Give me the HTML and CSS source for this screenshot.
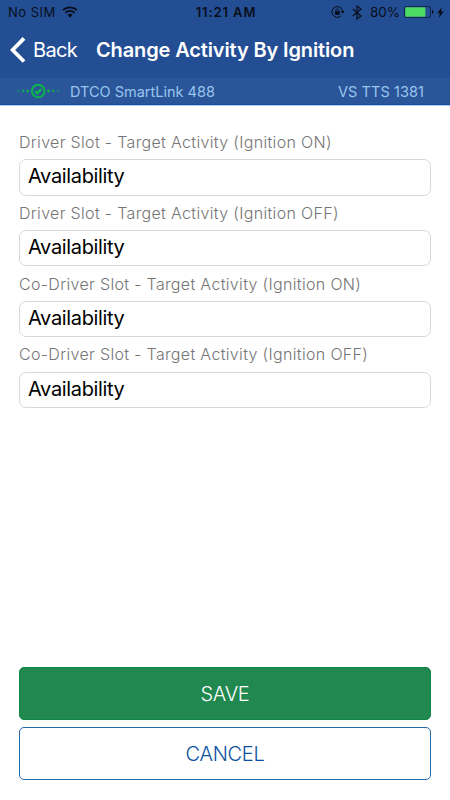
FILE: index.html
```html
<!DOCTYPE html>
<html lang="en">
<head>
<meta charset="utf-8">
<title>Change Activity By Ignition</title>
<link rel="stylesheet" href="styles.css">
</head>
<body>
<div class="screen">
  <header class="header">
    <div class="status">
      <div class="status-side">
        <span class="carrier">No SIM</span>
        <svg class="wifi" width="16" height="12" viewBox="0 0 16 12" fill="none" stroke="#070e1a" stroke-width="1.7"><path d="M1 4.2a10 10 0 0 1 14 0M3.4 6.8a6.5 6.5 0 0 1 9.2 0"/><path d="M8 11.5 5.5 9a3.5 3.5 0 0 1 5 0Z" fill="#070e1a" stroke="none"/></svg>
      </div>
      <span class="time">11:21 AM</span>
      <div class="status-side right">
        <svg class="lock" width="14" height="12" viewBox="0 0 14 12" fill="none" stroke="#070e1a"><path d="M11.7 5.8a5.4 5.4 0 1 0-1.6 4" stroke-width="1"/><path d="M9.7 5h4L11.7 7.8Z" fill="#070e1a" stroke="none"/><path d="M3.9 5.2h4.8v3.6H3.9Z" fill="#070e1a" stroke="none"/><path d="M4.9 5.5V4.3a1.4 1.4 0 0 1 2.8 0v1.2" stroke-width=".9"/></svg>
        <svg class="bluetooth" width="10" height="15" viewBox="0 0 10 15" fill="none" stroke="#070e1a" stroke-width="1.2"><path d="m.8 4 8.2 7-4 3V1l4 3-8.2 7"/></svg>
        <span class="percent">80%</span>
        <svg class="battery" width="30" height="12" viewBox="0 0 30 12"><rect x=".5" y=".5" width="26" height="11" rx="1.7" fill="none" stroke="#10264a"/><rect x="1.2" y="1.2" width="20.2" height="9.6" rx=".8" fill="#4cd964"/><path d="M28 4q1.5.3 1.5 2T28 8Z" fill="#070e1a"/></svg>
        <svg class="bolt" width="7" height="11" viewBox="0 0 7 11"><path d="M4.8 0 .3 6.2h2.5L1.8 11l4.9-6.4H4.1Z" fill="#070e1a"/></svg>
      </div>
    </div>
    <nav class="nav">
      <svg class="chevron" width="16" height="26" viewBox="0 0 16 26" fill="none" stroke="#fff" stroke-width="3.8"><path d="M14 1.3 2.6 13 14 24.5"/></svg>
      <span class="back">Back</span>
      <h1 class="title">Change Activity By Ignition</h1>
    </nav>
    <div class="device">
      <svg class="link" width="44" height="16" viewBox="0 0 44 16" fill="#0bb44e"><circle cx="2.3" cy="8" r="1.4" opacity=".4"/><circle cx="7" cy="8" r="1.4" opacity=".75"/><circle cx="11.7" cy="8" r="1.5"/><circle cx="32.5" cy="8" r="1.5"/><circle cx="37.4" cy="8" r="1.4" opacity=".75"/><circle cx="42.3" cy="8" r="1.4" opacity=".4"/><circle cx="22.2" cy="8" r="6.3" fill="none" stroke="#0bb44e" stroke-width="2"/><path d="m19.2 8.2 2.1 2 4-4" fill="none" stroke="#0bb44e" stroke-width="2.4"/></svg>
      <span class="device-name">DTCO SmartLink 488</span>
      <span class="vehicle">VS TTS 1381</span>
    </div>
  </header>
  <main class="form">
    <div class="field"><label class="label">Driver Slot - Target Activity (Ignition ON)</label><div class="value">Availability</div></div>
    <div class="field"><label class="label">Driver Slot - Target Activity (Ignition OFF)</label><div class="value">Availability</div></div>
    <div class="field"><label class="label">Co-Driver Slot - Target Activity (Ignition ON)</label><div class="value">Availability</div></div>
    <div class="field"><label class="label">Co-Driver Slot - Target Activity (Ignition OFF)</label><div class="value">Availability</div></div>
  </main>
  <footer class="actions">
    <button class="button save"><span>SAVE</span></button>
    <button class="button cancel"><span>CANCEL</span></button>
  </footer>
</div>
</body>
</html>
```
FILE: styles.css
```css
* { box-sizing: border-box; }
body { margin: 0; font-family: Inter, "Liberation Sans", sans-serif; }
.screen { width: 450px; height: 800px; display: flex; flex-direction: column; background: #fff; overflow: hidden; white-space: nowrap; }
svg { display: block; flex: none; }
.header { background: #244e94; height: 106px; flex: none; border-bottom: 1px solid #b5cbe5; }
.status { height: 24px; display: grid; grid-template-columns: 1fr auto 1fr; align-items: center; padding: 0 6px 0 8px; color: #070e1a; font-size: 13px; }
.status-side { display: flex; align-items: center; }
.status-side.right { justify-content: flex-end; }
.carrier { letter-spacing: .5px; }
.wifi { margin-left: 6px; }
.time { font-weight: 600; letter-spacing: .9px; }
.bluetooth { margin-left: 7px; }
.percent { margin-left: 8px; font-size: 13.5px; }
.battery { margin-left: 4px; }
.bolt { margin-left: 3px; }
.nav { height: 54px; display: flex; align-items: center; padding: 0 0 2px 10px; color: #fff; }
.back { margin-left: 7px; font-size: 20px; font-weight: 400; letter-spacing: -.7px; width: 63px; }
.title { margin: 0; font-size: 20px; font-weight: 600; letter-spacing: -.13px; }
.device { height: 27px; display: flex; align-items: center; padding: 0 26px 0 16px; background: #2b5599; border-bottom: 1px solid #0b51a4; color: #98c5ee; font-size: 14.5px; font-weight: 400; }
.device-name { margin-left: 10px; letter-spacing: 0; }
.vehicle { margin-left: auto; letter-spacing: .08px; }
.form { padding: 25px 19px 0; flex: 1; }
.field { height: 70.8px; }
.label { display: block; height: 28.2px; line-height: 23px; font-size: 16px; font-weight: 350; letter-spacing: .33px; color: #757575; }
.value { height: 36.5px; line-height: 33px; border: 1px solid #d9d9d9; border-radius: 7px; padding-left: 8px; font-size: 20px; font-weight: 400; letter-spacing: -.35px; color: #000; }
.actions { padding: 0 19px 20px; display: flex; flex-direction: column; gap: 7px; }
.button { height: 53px; border-radius: 5px; border: 1px solid #108544; font: 350 20px Inter, sans-serif; padding: 0; letter-spacing: -.3px; }
.save { background: #21894f; color: #fff; }
.cancel { background: #fff; border-color: #2468aa; color: #0b51a0; }
```
